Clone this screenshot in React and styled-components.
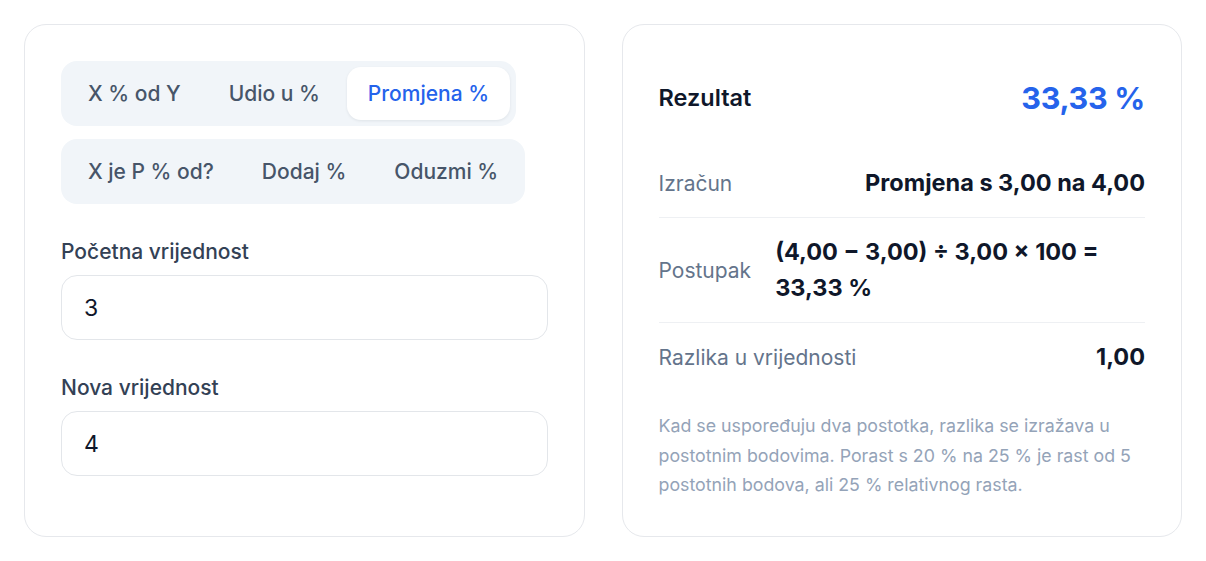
import React, { useState } from 'react';
import styled, { createGlobalStyle } from 'styled-components';

const GlobalStyle = createGlobalStyle`
  * { box-sizing: border-box; }
  body {
    margin: 0;
    background: #ffffff;
    font-family: 'Inter', 'Noto Sans', Arial, sans-serif;
    color: #0f172a;
  }
`;

const Page = styled.div`
  display: grid;
  grid-template-columns: 1fr 1fr;
  gap: 37px;
  padding: 24px;
`;

const Card = styled.section`
  border: 1px solid #e6e8ec;
  border-radius: 22px;
  padding: 36px;
  background: #fff;
`;

const Tabs = styled.div`
  display: flex;
  flex-direction: column;
  align-items: flex-start;
  gap: 13px;
  margin-bottom: 34px;
`;

const TabGroup = styled.div`
  display: inline-flex;
  gap: 6px;
  padding: 6px;
  background: #f1f5f9;
  border-radius: 16px;
`;

const Tab = styled.button`
  height: 53px;
  padding: 0 21px;
  border: none;
  border-radius: 14px;
  font-family: inherit;
  font-size: 21px;
  font-weight: 500;
  cursor: pointer;
  background: ${({ active }) => (active ? '#ffffff' : 'transparent')};
  color: ${({ active }) => (active ? '#2563eb' : '#475569')};
  box-shadow: ${({ active }) => (active ? '0 1px 3px rgba(15, 23, 42, 0.08)' : 'none')};
`;

const Field = styled.label`
  display: block;
  & + & {
    margin-top: 34px;
  }
`;

const FieldLabel = styled.div`
  font-size: 21px;
  font-weight: 500;
  line-height: 27px;
  color: #334155;
  margin-bottom: 10px;
`;

const Input = styled.input`
  display: block;
  width: 100%;
  height: 65px;
  padding: 0 22px;
  border: 1px solid #e3e6ea;
  border-radius: 16px;
  font-family: inherit;
  font-size: 23px;
  color: #0f172a;
  outline: none;
`;

const Header = styled.div`
  display: flex;
  justify-content: space-between;
  align-items: flex-start;
  padding-top: 20px;
  height: 88px;
`;

const HeaderTitle = styled.div`
  font-size: 23.5px;
  font-weight: 600;
  line-height: 34px;
  color: #0f172a;
`;

const HeaderValue = styled.div`
  font-size: 30.5px;
  font-weight: 700;
  line-height: 34px;
  color: #2563eb;
  letter-spacing: -0.3px;
`;

const Row = styled.div`
  display: flex;
  justify-content: space-between;
  align-items: center;
  gap: 24px;
  padding: 16px 0;
  border-bottom: ${({ last }) => (last ? 'none' : '1px solid #eef0f3')};
`;

const RowLabel = styled.div`
  flex-shrink: 0;
  font-size: 21px;
  color: #64748b;
`;

const RowValue = styled.div`
  font-size: 23.5px;
  font-weight: 700;
  line-height: 36px;
  color: #0f172a;
  text-align: left;
`;

const Note = styled.p`
  margin: 20px 0 0;
  font-size: 17.8px;
  line-height: 29.5px;
  color: #94a3b8;
`;

const firstRow = ['X % od Y', 'Udio u %', 'Promjena %'];
const secondRow = ['X je P % od?', 'Dodaj %', 'Oduzmi %'];

export default function App() {
  const [mode, setMode] = useState('Promjena %');
  const [start, setStart] = useState('3');
  const [next, setNext] = useState('4');

  return (
    <>
      <GlobalStyle />
      <Page>
        <Card>
          <Tabs>
            <TabGroup>
              {firstRow.map((t) => (
                <Tab key={t} active={mode === t} onClick={() => setMode(t)}>{t}</Tab>
              ))}
            </TabGroup>
            <TabGroup>
              {secondRow.map((t) => (
                <Tab key={t} active={mode === t} onClick={() => setMode(t)}>{t}</Tab>
              ))}
            </TabGroup>
          </Tabs>
          <Field>
            <FieldLabel>Početna vrijednost</FieldLabel>
            <Input value={start} onChange={(e) => setStart(e.target.value)} />
          </Field>
          <Field>
            <FieldLabel>Nova vrijednost</FieldLabel>
            <Input value={next} onChange={(e) => setNext(e.target.value)} />
          </Field>
        </Card>
        <Card>
          <Header>
            <HeaderTitle>Rezultat</HeaderTitle>
            <HeaderValue>33,33 %</HeaderValue>
          </Header>
          <Row>
            <RowLabel>Izračun</RowLabel>
            <RowValue>Promjena s 3,00 na 4,00</RowValue>
          </Row>
          <Row>
            <RowLabel>Postupak</RowLabel>
            <RowValue>(4,00 − 3,00) ÷ 3,00 × 100 = 33,33 %</RowValue>
          </Row>
          <Row last>
            <RowLabel>Razlika u vrijednosti</RowLabel>
            <RowValue>1,00</RowValue>
          </Row>
          <Note>
            Kad se uspoređuju dva postotka, razlika se izražava u postotnim bodovima. Porast s 20 % na 25 % je rast od 5 postotnih bodova, ali 25 % relativnog rasta.
          </Note>
        </Card>
      </Page>
    </>
  );
}
